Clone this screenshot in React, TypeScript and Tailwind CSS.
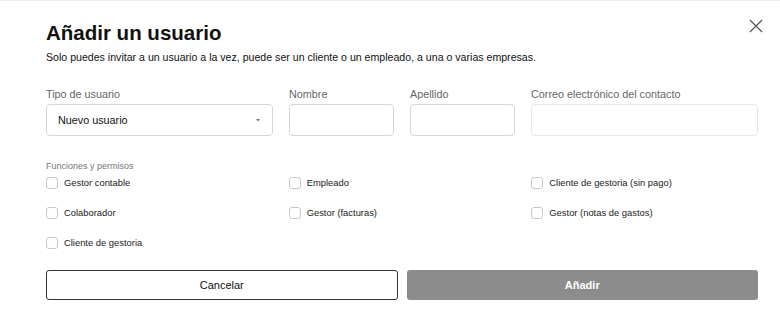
import React from "react";

const Check = ({ label }: { label: string }) => (
  <label className="flex h-4 items-center gap-[6px]">
    <span className="h-[12px] w-[12px] rounded-[3px] border border-[#c8c8c8] bg-white" />
    <span className="text-[9.4px] text-[#1a1a1a]">{label}</span>
  </label>
);

const Field = ({ label, children }: { label: string; children?: React.ReactNode }) => (
  <div className="flex flex-col">
    <div className="mb-[3px] h-[14px] text-[10.8px] leading-[14px] text-[#666]">{label}</div>
    {children}
  </div>
);

export default function App() {
  return (
    <div
      className="relative h-[311px] w-[780px] overflow-hidden border-t border-[#ececec] bg-white pl-[46px] pr-[22px]"
      style={{ fontFamily: '"Liberation Sans", Arial, sans-serif' }}
    >
      <button className="absolute right-[17px] top-[18px] h-[14px] w-[14px] text-[#555]" aria-label="Cerrar">
        <svg viewBox="0 0 14 14" width="14" height="14" fill="none" stroke="currentColor" strokeWidth="1.3">
          <path d="M1 1 L13 13 M13 1 L1 13" />
        </svg>
      </button>

      <h1 className="mt-[20px] h-[24px] text-[20.5px] font-bold leading-[24px] text-[#111]">Añadir un usuario</h1>
      <p className="mt-[4px] h-[16px] text-[10.6px] leading-[16px] text-[#111]">
        Solo puedes invitar a un usuario a la vez, puede ser un cliente o un empleado, a una o varias empresas.
      </p>

      <div className="mt-[22px] grid grid-cols-[227px_105px_105px_227px] gap-x-4">
        <Field label="Tipo de usuario">
          <div className="flex h-[32px] items-center justify-between rounded-[4px] border border-[#d6d6d6] pl-[11px] pr-[12px]">
            <span className="text-[10.8px] text-[#111]">Nuevo usuario</span>
            <svg width="4" height="3" viewBox="0 0 4 3">
              <path d="M0 0 H4 L2 2.5 Z" fill="#777" />
            </svg>
          </div>
        </Field>
        <Field label="Nombre">
          <div className="h-[32px] rounded-[4px] border border-[#d6d6d6]" />
        </Field>
        <Field label="Apellido">
          <div className="h-[32px] rounded-[4px] border border-[#d6d6d6]" />
        </Field>
        <Field label="Correo electrónico del contacto">
          <div className="h-[32px] rounded-[4px] border border-[#e8e8e8]" />
        </Field>
      </div>

      <div className="mt-[24px] h-[12px] text-[9px] leading-[12px] text-[#777]">Funciones y permisos</div>

      <div className="mt-[3px] grid grid-cols-3 gap-x-4 gap-y-[14px]">
        <Check label="Gestor contable" />
        <Check label="Empleado" />
        <Check label="Cliente de gestoria (sin pago)" />
        <Check label="Colaborador" />
        <Check label="Gestor (facturas)" />
        <Check label="Gestor (notas de gastos)" />
        <Check label="Cliente de gestoria" />
      </div>

      <div className="mt-[19px] grid grid-cols-2 gap-x-[9px]">
        <button className="h-[30px] rounded-[3px] border border-[#333] bg-white text-[11px] text-[#111]">Cancelar</button>
        <button className="h-[30px] rounded-[3px] bg-[#8c8c8c] text-[11px] font-bold text-white">Añadir</button>
      </div>
    </div>
  );
}
